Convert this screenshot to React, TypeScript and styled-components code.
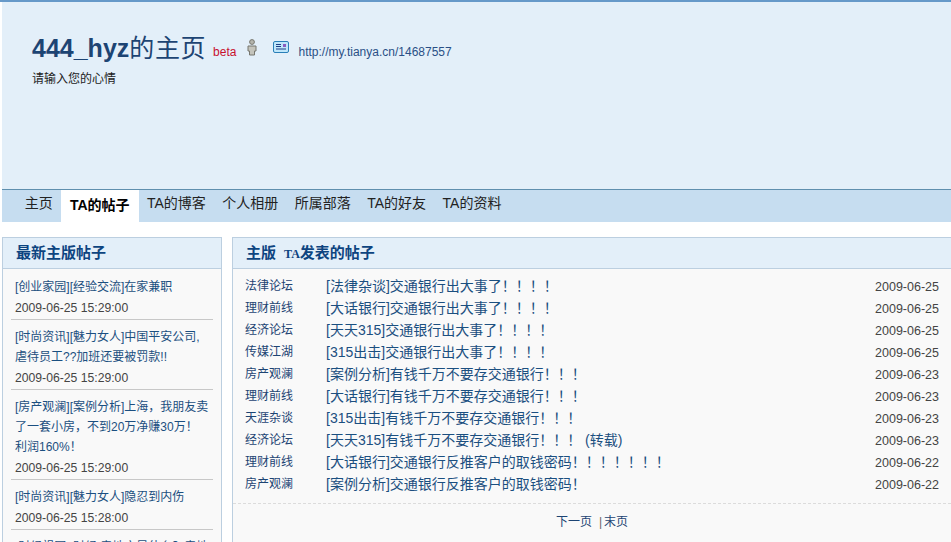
import styled, {createGlobalStyle} from 'styled-components';

const GlobalStyle = createGlobalStyle`
  html, body {
    margin: 0;
    padding: 0;
    height: 542px;
    overflow: hidden;
    background: #fff;
  }
  body {
    font-family: "Liberation Sans", "Noto Sans CJK SC", sans-serif;
    font-size: 12px;
    color: #333;
  }
`;

const tabs = ['主页', 'TA的帖子', 'TA的博客', '个人相册', '所属部落', 'TA的好友', 'TA的资料'];

const latest = [
  {lines: ['[创业家园][经验交流]在家兼职'], time: '2009-06-25 15:29:00'},
  {lines: ['[时尚资讯][魅力女人]中国平安公司,', '虐待员工??加班还要被罚款!!'], time: '2009-06-25 15:29:00'},
  {
    lines: ['[房产观澜][案例分析]上海，我朋友卖', '了一套小房，不到20万净赚30万！', '利润160%！'],
    time: '2009-06-25 15:29:00',
  },
  {lines: ['[时尚资讯][魅力女人]隐忍到内伤'], time: '2009-06-25 15:28:00'},
  {lines: ['[财经祖国][财经]房地产是什么？房地产是'], time: ''},
];

const posts = [
  {board: '法律论坛', title: '[法律杂谈]交通银行出大事了！！！！', date: '2009-06-25'},
  {board: '理财前线', title: '[大话银行]交通银行出大事了！！！！', date: '2009-06-25'},
  {board: '经济论坛', title: '[天天315]交通银行出大事了！！！！', date: '2009-06-25'},
  {board: '传媒江湖', title: '[315出击]交通银行出大事了！！！！', date: '2009-06-25'},
  {board: '房产观澜', title: '[案例分析]有钱千万不要存交通银行！！！', date: '2009-06-23'},
  {board: '理财前线', title: '[大话银行]有钱千万不要存交通银行！！！', date: '2009-06-23'},
  {board: '天涯杂谈', title: '[315出击]有钱千万不要存交通银行！！！', date: '2009-06-23'},
  {board: '经济论坛', title: '[天天315]有钱千万不要存交通银行！！！ (转载)', date: '2009-06-23'},
  {board: '理财前线', title: '[大话银行]交通银行反推客户的取钱密码！！！！！！！', date: '2009-06-22'},
  {board: '房产观澜', title: '[案例分析]交通银行反推客户的取钱密码！', date: '2009-06-22'},
];

export default function App() {
  return (
    <Page>
      <GlobalStyle />
      <Header>
        <TitleRow>
          <Title>
            <b>444_hyz</b>的主页
          </Title>
          <Beta>beta</Beta>
          <PersonIcon viewBox="0 0 12 17">
            <circle cx="6" cy="3" r="2.4" fill="#b5b5ad" stroke="#77776f" />
            <path d="M2 7h8v5H8.5v4h-5v-4H2z" fill="#c4c4bc" stroke="#77776f" />
          </PersonIcon>
          <CardIcon viewBox="0 0 16 12">
            <rect x="0.5" y="0.5" width="15" height="11" rx="1.5" fill="#bfe6fa" stroke="#2a7fb8" />
            <path d="M3 3.5h5M3 5.5h5M3 8h10" stroke="#1f3f86" />
            <rect x="10" y="3" width="3" height="3" fill="#8a5cc0" />
          </CardIcon>
          <HomeLink>http://my.tianya.cn/14687557</HomeLink>
        </TitleRow>
        <Mood>请输入您的心情</Mood>
      </Header>
      <Nav>
        {tabs.map((tab, i) => (
          <Tab key={tab} $active={i === 1}>
            {tab}
          </Tab>
        ))}
      </Nav>
      <Columns>
        <SidePanel>
          <PanelHead>最新主版帖子</PanelHead>
          <SideList>
            {latest.map(item => (
              <SideItem key={item.lines[0]}>
                {item.lines.map(line => (
                  <SideLine key={line}>{line}</SideLine>
                ))}
                {item.time && <SideTime>{item.time}</SideTime>}
              </SideItem>
            ))}
          </SideList>
        </SidePanel>
        <MainPanel>
          <PanelHead>
            主版<HeadLatin>TA</HeadLatin>发表的帖子
          </PanelHead>
          <PostList>
            {posts.map(post => (
              <PostRow key={post.board + post.title}>
                <Board>{post.board}</Board>
                <PostTitle>{post.title}</PostTitle>
                <PostDate>{post.date}</PostDate>
              </PostRow>
            ))}
          </PostList>
          <Pager>
            <span>下一页</span>
            <PagerSep>|</PagerSep>
            <span>末页</span>
          </Pager>
        </MainPanel>
      </Columns>
    </Page>
  );
}

const Page = styled.div`
  width: 951px;
  height: 542px;
  overflow: hidden;
  border-top: 2px solid #6699c9;
  box-sizing: border-box;
  padding-left: 2px;
`;

const Header = styled.div`
  height: 187px;
  background: #e3eff9;
  box-sizing: border-box;
  padding: 30px 0 0 30px;
`;

const TitleRow = styled.div`
  display: flex;
  align-items: center;
  height: 32px;
`;

const Title = styled.h1`
  margin: 0 0 4px;
  font-size: 25px;
  font-weight: normal;
  letter-spacing: 0.6px;
  color: #1d4473;

  b {
    font-weight: bold;
    letter-spacing: 0;
  }
`;

const Beta = styled.span`
  margin: 7px 0 0 7px;
  font-size: 12px;
  color: #c8102e;
`;

const PersonIcon = styled.svg`
  width: 12px;
  height: 17px;
  margin: 0 0 2px 10px;
`;

const CardIcon = styled.svg`
  width: 16px;
  height: 12px;
  margin: 0 0 3px 15px;
`;

const HomeLink = styled.span`
  margin: 8px 0 0 9px;
  font-size: 12px;
  color: #2a4f86;
`;

const Mood = styled.div`
  margin-top: 7px;
  font-size: 12px;
  line-height: 16px;
  color: #222;
`;

const Nav = styled.div`
  display: flex;
  height: 33px;
  box-sizing: border-box;
  padding-left: 14.5px;
  background: #c6ddf0;
  border-top: 1px solid #5f8fae;
`;

const Tab = styled.div<{$active?: boolean}>`
  padding: 0 ${({$active}) => ($active ? '9px' : '8.25px')};
  font-size: 14px;
  line-height: ${({$active}) => ($active ? '30px' : '27px')};
  color: ${({$active}) => ($active ? '#000' : '#222')};
  font-weight: ${({$active}) => ($active ? 'bold' : 'normal')};
  background: ${({$active}) => ($active ? '#fff' : 'transparent')};
`;

const Columns = styled.div`
  display: flex;
  align-items: flex-start;
  gap: 10px;
  margin-top: 15px;
`;

const SidePanel = styled.div`
  width: 220px;
  flex: none;
  box-sizing: border-box;
  border: 1px solid #bccfe0;
  background: #f9f9f9;
`;

const MainPanel = styled.div`
  flex: 1;
  min-width: 0;
  box-sizing: border-box;
  border: 1px solid #bccfe0;
  border-right: none;
  background: #f9f9f9;
`;

const PanelHead = styled.div`
  height: 31px;
  box-sizing: border-box;
  padding-left: 13px;
  background: #e3eff9;
  border-bottom: 1px solid #bccfe0;
  font-family: "Liberation Serif", "Noto Sans CJK SC", serif;
  font-size: 15px;
  font-weight: bold;
  line-height: 31px;
  color: #0d4480;
`;

const HeadLatin = styled.span`
  margin-left: 8px;
  font-size: 12px;
`;

const SideList = styled.div`
  padding: 1px 8px 0;
`;

const SideItem = styled.div`
  padding: 7px 0 1px;
  border-bottom: 1px solid #c8c8c8;
`;

const SideLine = styled.div`
  padding-left: 4px;
  font-size: 12px;
  line-height: 20px;
  color: #1b4f80;
`;

const SideTime = styled.div`
  margin-top: 1px;
  padding-left: 4px;
  font-size: 12.2px;
  line-height: 20px;
  color: #444;
`;

const PostList = styled.div`
  padding: 5px 0 9px;
  border-bottom: 1px dashed #dcdcdc;
`;

const PostRow = styled.div`
  display: flex;
  align-items: center;
  height: 22px;
  padding: 0 12px;
`;

const Board = styled.span`
  width: 81px;
  flex: none;
  margin-bottom: 2px;
  font-size: 12px;
  color: #1d4473;
`;

const PostTitle = styled.span`
  flex: 1;
  font-size: 14px;
  color: #1b4f80;
`;

const PostDate = styled.span`
  margin-top: 3px;
  font-size: 12.5px;
  color: #444;
`;

const Pager = styled.div`
  padding: 10px 0 20px;
  font-size: 12px;
  line-height: 16px;
  color: #1d4473;
  text-align: center;
`;

const PagerSep = styled.span`
  margin: 0 2px 0 7px;
  color: #666;
`;
